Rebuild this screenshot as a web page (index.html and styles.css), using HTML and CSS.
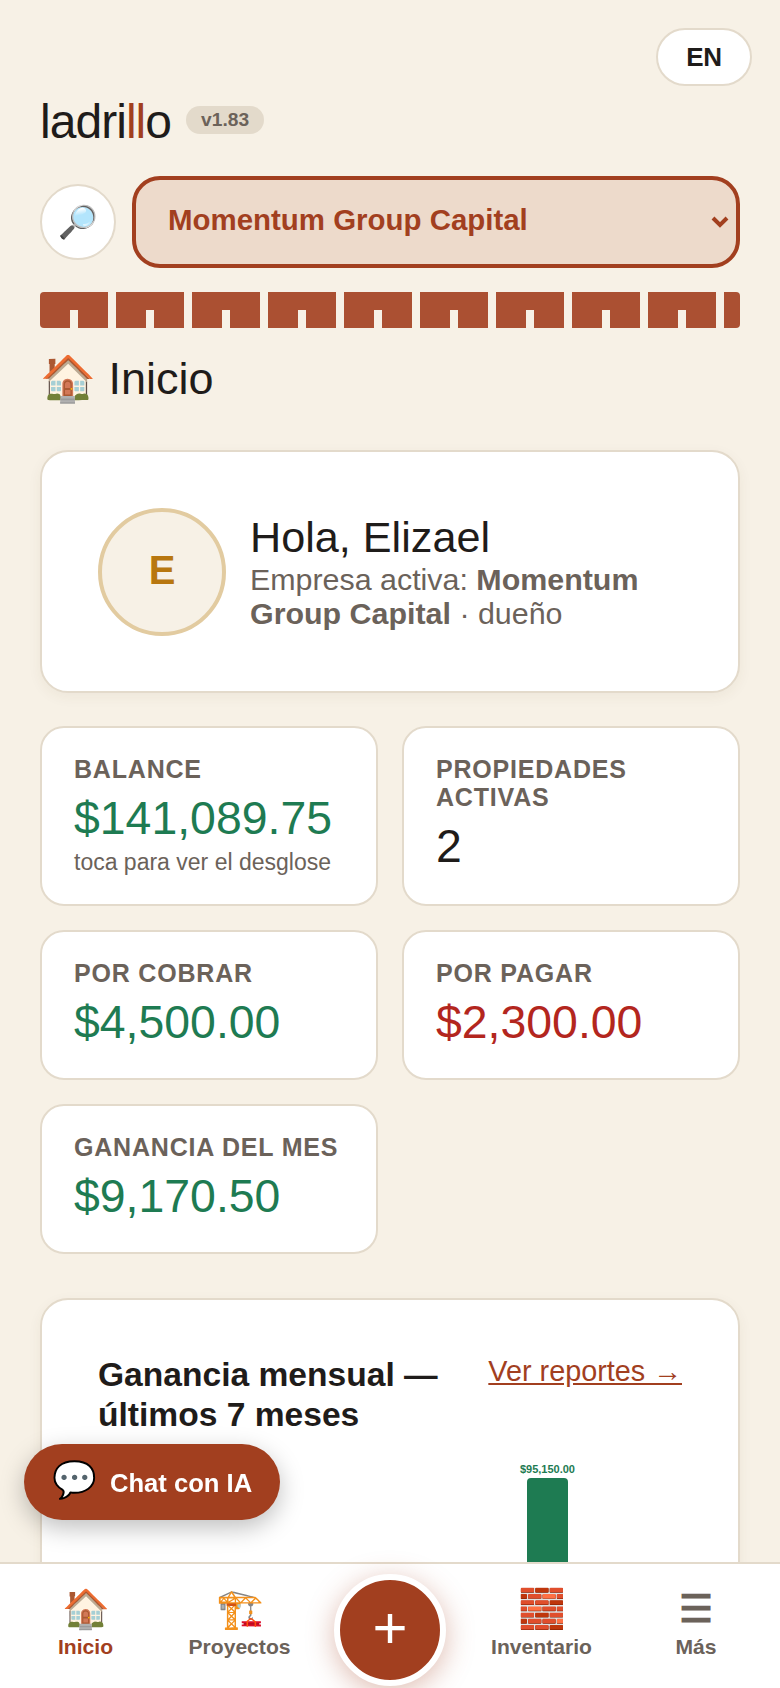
FILE: index.html
```html
<!DOCTYPE html>
<html lang="es">
<head>
  <meta charset="UTF-8">
  <meta name="viewport" content="width=device-width, initial-scale=1.0">
  <title>ladrillo</title>
  <link rel="stylesheet" href="styles.css">
</head>
<body>
  <main class="page">
    <!-- Top bar -->
    <div class="lang-row">
      <button class="lang-btn">EN</button>
    </div>
    <div class="brand">
      <span class="logo">ladri<span class="logo-ll">ll</span>o</span>
      <span class="version">v1.83</span>
    </div>
    <div class="company-row">
      <button class="search-btn">🔎</button>
      <div class="select-wrap">
        <select class="company-select">
          <option>Momentum Group Capital</option>
        </select>
        <svg class="select-arrow" width="20" height="14" viewBox="0 0 20 14"><path d="M3 3l7 7 7-7" fill="none" stroke="#a23f1f" stroke-width="4"/></svg>
      </div>
    </div>
    <div class="brick-strip"></div>

    <h1 class="page-title"><span class="page-emoji">🏠</span> Inicio</h1>

    <!-- Welcome -->
    <section class="card welcome">
      <div class="avatar">E</div>
      <div class="welcome-text">
        <div class="hello">Hola, Elizael</div>
        <div class="company-line">Empresa activa: <strong>Momentum Group Capital</strong> · dueño</div>
      </div>
    </section>

    <!-- Stats -->
    <section class="stats">
      <div class="stat">
        <div class="stat-label">Balance</div>
        <div class="stat-value green">$141,089.75</div>
        <div class="stat-hint">toca para ver el desglose</div>
      </div>
      <div class="stat">
        <div class="stat-label">Propiedades activas</div>
        <div class="stat-value">2</div>
      </div>
      <div class="stat">
        <div class="stat-label">Por cobrar</div>
        <div class="stat-value green">$4,500.00</div>
      </div>
      <div class="stat">
        <div class="stat-label">Por pagar</div>
        <div class="stat-value red">$2,300.00</div>
      </div>
      <div class="stat">
        <div class="stat-label">Ganancia del mes</div>
        <div class="stat-value green">$9,170.50</div>
      </div>
    </section>

    <!-- Chart -->
    <section class="card chart-card">
      <div class="chart-head">
        <h2>Ganancia mensual — últimos 7 meses</h2>
        <a class="chart-link" href="#">Ver reportes →</a>
      </div>
      <div class="chart">
        <div class="chart-col"></div>
        <div class="chart-col"></div>
        <div class="chart-col"></div>
        <div class="chart-col"></div>
        <div class="chart-col"></div>
        <div class="chart-col">
          <span class="bar-label">$95,150.00</span>
          <div class="bar" style="height: 260px"></div>
        </div>
        <div class="chart-col"></div>
      </div>
    </section>
  </main>

  <!-- Floating chat -->
  <button class="chat-btn"><span class="chat-emoji">💬</span>Chat con IA</button>

  <!-- Bottom nav -->
  <nav class="bottom-nav">
    <a class="nav-item active" href="#"><span class="nav-icon">🏠</span>Inicio</a>
    <a class="nav-item" href="#"><span class="nav-icon">🏗️</span>Proyectos</a>
    <div class="nav-center"><button class="fab">+</button></div>
    <a class="nav-item" href="#"><span class="nav-icon">🧱</span>Inventario</a>
    <a class="nav-item" href="#"><span class="nav-icon">☰</span>Más</a>
  </nav>
</body>
</html>
```

FILE: styles.css
```css
/* Base */
* {
  box-sizing: border-box;
}

html, body {
  margin: 0;
  height: 1688px;
  overflow: hidden;
}

body {
  font-family: 'Liberation Sans', Arial, sans-serif;
  background: #f7f1e6;
  color: #1f1c1a;
}

.page {
  height: 1688px;
  overflow: hidden;
  padding: 28px 40px 0;
}

/* Top bar */
.lang-row {
  display: flex;
  justify-content: flex-end;
  margin-right: -12px;
}

.lang-btn {
  width: 96px;
  height: 58px;
  background: #fff;
  border: 2px solid #e3dacb;
  border-radius: 29px;
  font-family: inherit;
  font-size: 26px;
  font-weight: 700;
  letter-spacing: -0.3px;
  color: #1f1c1a;
}

.brand {
  display: flex;
  align-items: center;
  gap: 15px;
  margin-top: 4px;
  height: 62px;
}

.logo {
  font-size: 48px;
  letter-spacing: -0.96px;
}

.logo-ll {
  color: #a23f1f;
}

.version {
  background: #e3dacb;
  color: #6b625a;
  font-size: 19.2px;
  line-height: 28px;
  font-weight: 700;
  padding: 0 15px;
  border-radius: 14px;
  margin-bottom: 2px;
}

.company-row {
  display: flex;
  align-items: center;
  gap: 16px;
  margin-top: 24px;
}

.search-btn {
  flex: none;
  width: 76px;
  height: 76px;
  background: #fff;
  border: 2px solid #e3dacb;
  border-radius: 50%;
  font-size: 32px;
  padding: 0;
}

.select-wrap {
  flex: 1;
  min-width: 0;
  position: relative;
}

.company-select {
  display: block;
  width: 100%;
  height: 92px;
  padding: 0 0 6px 32px;
  appearance: none;
  background: #eddacb;
  border: 4px solid #a23f1f;
  border-radius: 28px;
  font-family: inherit;
  font-size: 29.44px;
  font-weight: 700;
  color: #a23f1f;
}

.select-arrow {
  position: absolute;
  right: 10px;
  top: 39px;
}

/* Repeating brick band, notch cut into each brick */
.brick-strip {
  height: 36px;
  margin-top: 24px;
  border-radius: 4px;
  background:
    linear-gradient(90deg, transparent 30px, #f7f1e6 30px, #f7f1e6 38px, transparent 38px) 0 18px / 76px 18px repeat-x,
    linear-gradient(90deg, #ab5032 68px, #f7f1e6 68px) 0 0 / 76px 36px repeat-x;
}

.page-title {
  margin: 25px 0 0;
  font-size: 45px;
  font-weight: 400;
  line-height: 52px;
}

/* Cards */
.card {
  background: #fff;
  border: 2px solid #e3dacb;
  border-radius: 28px;
  box-shadow: 0 4px 14px rgba(90, 60, 30, 0.06);
}

.welcome {
  display: flex;
  align-items: center;
  gap: 24px;
  margin-top: 45px;
  padding: 56px;
  height: 243px;
}

.avatar {
  flex: none;
  display: flex;
  align-items: center;
  justify-content: center;
  width: 128px;
  height: 128px;
  padding-bottom: 2px;
  background: #f7f1e6;
  border: 4px solid #e2cba0;
  border-radius: 50%;
  color: #b8770f;
  font-size: 40px;
  font-weight: 700;
}

.hello {
  font-size: 43.2px;
  line-height: 48px;
  margin-bottom: 1px;
}

.company-line {
  font-size: 30.4px;
  line-height: 34px;
  margin-bottom: 1px;
  color: #6b625a;
}

/* Stats */
.stats {
  display: grid;
  grid-template-columns: repeat(2, minmax(0, 1fr));
  gap: 24px;
  margin-top: 33px;
}

.stat {
  background: #fff;
  border: 2px solid #e3dacb;
  border-radius: 24px;
  padding: 27px 32px 28px;
}

.stat-label {
  font-size: 25px;
  line-height: 28px;
  font-weight: 700;
  letter-spacing: 0.8px;
  text-transform: uppercase;
  color: #6b625a;
}

.stat-value {
  font-size: 46.4px;
  line-height: 56px;
  margin-top: 7px;
}

.stat-hint {
  font-size: 23px;
  line-height: 28px;
  margin-top: 2px;
  color: #6b625a;
}

.green {
  color: #1e7b52;
}

.red {
  color: #b3261e;
}

/* Chart */
.chart-card {
  margin-top: 44px;
  padding: 55px 56px 0;
  height: 500px;
}

.chart-head {
  display: flex;
  justify-content: space-between;
  align-items: flex-start;
  gap: 40px;
}

.chart-head h2 {
  margin: 0;
  font-size: 33.6px;
  line-height: 40px;
  font-weight: 700;
}

.chart-link {
  flex: none;
  font-size: 28.8px;
  line-height: 32px;
  color: #a23f1f;
}

.chart {
  display: grid;
  grid-template-columns: repeat(7, 1fr);
  width: 572px;
  margin-top: 27px;
}

.chart-col {
  display: flex;
  flex-direction: column;
  align-items: center;
}

.bar-label {
  font-size: 11px;
  line-height: 14px;
  font-weight: 700;
  color: #1e7b52;
}

.bar {
  width: 41px;
  margin-top: 2px;
  background: #1e7b52;
  border-radius: 4px 4px 0 0;
}

/* Floating chat */
.chat-btn {
  position: fixed;
  left: 24px;
  top: 1444px;
  display: flex;
  align-items: center;
  gap: 13px;
  width: 256px;
  height: 76px;
  padding: 2px 28px 0;
  background: #a23f1f;
  border: none;
  border-radius: 38px;
  box-shadow: 0 8px 24px rgba(0, 0, 0, 0.25);
  color: #fff;
  font-family: inherit;
  font-size: 25.6px;
  font-weight: 700;
  white-space: nowrap;
}

.chat-emoji {
  font-size: 36px;
  margin-bottom: 6px;
}

/* Bottom nav */
.bottom-nav {
  position: fixed;
  left: 0;
  right: 0;
  bottom: 0;
  display: grid;
  grid-template-columns: 147px 161px 141px 161px 148px;
  height: 126px;
  padding: 20px 10px 0 12px;
  background: #fff;
  border-top: 2px solid #e3dacb;
}

.nav-item {
  display: flex;
  flex-direction: column;
  align-items: center;
  font-size: 21.12px;
  line-height: 26px;
  font-weight: 700;
  color: #6b625a;
  text-decoration: none;
}

.nav-item.active {
  color: #a23f1f;
}

.nav-icon {
  font-size: 38.4px;
  line-height: 50px;
}

.nav-center {
  position: relative;
}

.fab {
  position: absolute;
  left: 14px;
  top: -10px;
  width: 112px;
  height: 112px;
  padding: 0 0 4px;
  background: #a23f1f;
  border: 6px solid #fff;
  border-radius: 50%;
  box-shadow: 0 6px 28px rgba(162, 63, 31, 0.35);
  color: #fff;
  font-family: inherit;
  font-size: 60px;
  font-weight: 400;
  line-height: 1;
}
```
